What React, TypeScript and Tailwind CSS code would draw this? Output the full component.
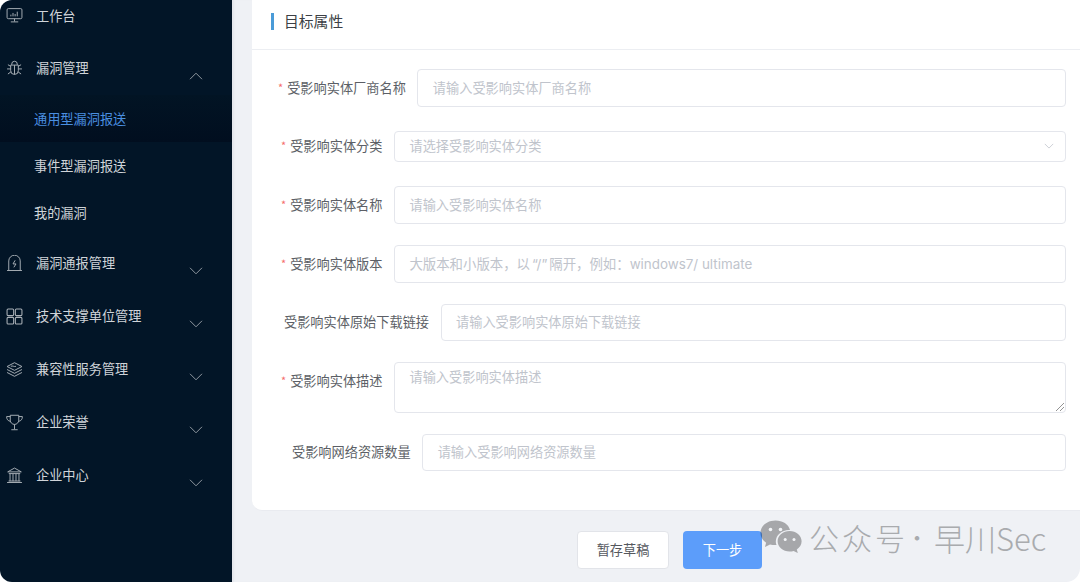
import React from "react";

const font = { fontFamily: '"Noto Sans CJK SC", "Noto Sans", sans-serif' };
const latin = { fontFamily: 'Inter, "Noto Sans CJK SC", sans-serif' };

const iconCls = "w-[17px] h-[17px] shrink-0 text-[#aab1b8]";

function Monitor() {
  return (
    <svg viewBox="0 0 16 16" fill="none" stroke="currentColor" strokeWidth="0.9" className={iconCls}>
      <rect x="1" y="1.5" width="14" height="9.5" rx="1.2" />
      <path d="M8 11v2.6M4.5 14h7M4.6 8.8V7.2M6.6 8.8V5.6M8.6 8.8V6.6M10.6 8.8V4.4" />
    </svg>
  );
}
function Bug() {
  return (
    <svg viewBox="0 0 16 16" fill="none" stroke="currentColor" strokeWidth="0.9" className={iconCls}>
      <path d="M5.4 4.6V3.8a2.6 2.6 0 0 1 5.2 0v.8" />
      <path d="M4.4 4.8h7.2v5.2a3.6 3.6 0 0 1-7.2 0z" />
      <path d="M8 4.8V13.6M1 8.4h3.4M11.6 8.4H15M1.8 4.4l2.6 1.6M14.2 4.4l-2.6 1.6M1.8 13.2l2.8-2M14.2 13.2l-2.8-2" />
    </svg>
  );
}
function Alarm() {
  return (
    <svg viewBox="0 0 16 16" fill="none" stroke="currentColor" strokeWidth="0.9" className={iconCls}>
      <path d="M2.6 14.4V5.6a5.4 5.4 0 0 1 10.8 0v8.8" />
      <path d="M1 14.6h14" />
      <path d="M8.6 5 6.6 8.4h2.8L7.4 11.6" />
    </svg>
  );
}
function Grid() {
  return (
    <svg viewBox="0 0 16 16" fill="none" stroke="currentColor" strokeWidth="1" className={iconCls}>
      <rect x="1" y="1" width="6.2" height="6.2" rx="1" />
      <rect x="8.8" y="1" width="6.2" height="6.2" rx="1" />
      <rect x="1" y="8.8" width="6.2" height="6.2" rx="1" />
      <rect x="8.8" y="8.8" width="6.2" height="6.2" rx="1" />
    </svg>
  );
}
function Layers() {
  return (
    <svg viewBox="0 0 16 16" fill="none" stroke="currentColor" strokeWidth="0.9" className={iconCls}>
      <path d="M8 1.6 15 5.2 8 8.8 1 5.2z" />
      <path d="M1 8 8 11.6 15 8" />
      <path d="M1 10.8 8 14.4 15 10.8" />
      <path d="M4.6 5c1.6-.9 3 .7 4.8 0" />
    </svg>
  );
}
function Trophy() {
  return (
    <svg viewBox="0 0 16 16" fill="none" stroke="currentColor" strokeWidth="0.9" className={iconCls}>
      <path d="M4 1.2h8v4.6a4 4 0 0 1-8 0z" />
      <path d="M4 2.4H.6c0 2.6 1 4 3.8 4.6M12 2.4h3.4c0 2.6-1 4-3.8 4.6" />
      <path d="M8 9.8v4.6M5 14.8h6" />
    </svg>
  );
}
function Bank() {
  return (
    <svg viewBox="0 0 16 16" fill="none" stroke="currentColor" strokeWidth="0.9" className={iconCls}>
      <path d="M8 1 1.6 4.6h12.8z" />
      <path d="M2.6 6.2h10.8M1 14.6h14M3.8 6.6v6.8M6.6 6.6v6.8M9.4 6.6v6.8M12.2 6.6v6.8M2.4 13.2h11.2" />
    </svg>
  );
}
function Chevron({ up }: { up?: boolean }) {
  return (
    <svg viewBox="0 0 14 8" fill="none" stroke="#8f979f" strokeWidth="1" className="w-[14px] h-[8px]">
      <path d={up ? "M1 7.2 7 1.2l6 6" : "M1 .8l6 6 6-6"} />
    </svg>
  );
}

function NavItem({
  icon,
  label,
  up,
  noChevron,
  h = "h-[53px]",
}: {
  icon: React.ReactNode;
  label: string;
  up?: boolean;
  noChevron?: boolean;
  h?: string;
}) {
  return (
    <div className={"flex items-center pl-[6px] relative shrink-0 " + h}>
      <div className="w-[16px] h-[16px] flex items-center justify-center">{icon}</div>
      <span className="ml-[14px] text-[13.2px] text-[#d0d4d9] leading-none">{label}</span>
      {!noChevron && (
        <div className="absolute left-[189px] top-[30px]">
          <Chevron up={up} />
        </div>
      )}
    </div>
  );
}

function SubItem({ label, active }: { label: string; active?: boolean }) {
  return (
    <div
      className={
        "h-[47.35px] flex items-center pl-[34px] text-[13.2px] leading-none shrink-0 " +
        (active ? "text-[#4a8fe0] bg-gradient-to-b from-[#021424] to-[#010e1f]" : "text-[#d0d4d9]")
      }
    >
      {label}
    </div>
  );
}

function Label({ text, required, pl }: { text: string; required?: boolean; pl: string }) {
  return (
    <div className={"flex items-center shrink-0 text-[13.2px] text-[#5c5f66] leading-none " + pl}>
      {required && <span className="text-[#f56c6c] text-[11px] mr-[4px] leading-none">*</span>}
      <span>{text}</span>
    </div>
  );
}

const boxCls =
  "flex-1 min-w-0 border border-[#e4e6ec] rounded-[4px] bg-white text-[13.2px] text-[#c0c4cc] flex items-center pr-[11px] leading-none";
const gapA = " ml-[11px] pl-[15px]";
const gapB = " ml-[11.5px] pl-[14.5px]";

function Row({
  label,
  required,
  pl,
  placeholder,
  h,
  mt,
  select,
  gap = gapB,
}: {
  label: string;
  required?: boolean;
  pl: string;
  placeholder: React.ReactNode;
  h: string;
  mt: string;
  select?: boolean;
  gap?: string;
}) {
  return (
    <div className={"flex items-center pr-[14px] " + mt}>
      <Label text={label} required={required} pl={pl} />
      <div className={boxCls + gap + " justify-between " + h}>
        <span>{placeholder}</span>
        {select && (
          <svg viewBox="0 0 12 7" fill="none" stroke="#c4c8cf" strokeWidth="1" className="w-[10px] h-[6px]">
            <path d="M1 1l5 5 5-5" />
          </svg>
        )}
      </div>
    </div>
  );
}

export default function App() {
  return (
    <div className="relative w-[1080px] h-[582px] bg-white overflow-hidden" style={font}>
      <div className="w-full h-full flex bg-[#eff1f5] rounded-tl-[12px] rounded-bl-[12px] rounded-br-[14px] overflow-hidden">
        <aside className="w-[232px] h-full bg-[#021527] shrink-0 overflow-hidden">
          <div className="flex flex-col -mt-[10.5px]">
            <NavItem icon={<Monitor />} label="工作台" noChevron h="h-[52px]" />
            <NavItem icon={<Bug />} label="漏洞管理" up />
            <SubItem label="通用型漏洞报送" active />
            <SubItem label="事件型漏洞报送" />
            <SubItem label="我的漏洞" />
            <NavItem icon={<Alarm />} label="漏洞通报管理" />
            <NavItem icon={<Grid />} label="技术支撑单位管理" />
            <NavItem icon={<Layers />} label="兼容性服务管理" />
            <NavItem icon={<Trophy />} label="企业荣誉" />
            <NavItem icon={<Bank />} label="企业中心" />
          </div>
        </aside>
        <main className="flex-1 min-w-0 flex flex-col pl-[20px] shadow-[inset_3px_0_2px_-1px_#e4e6eb]">
          <section className="h-[511px] bg-white rounded-bl-[10px] shrink-0 border-b border-[#e9ebf0]">
            <div className="h-[50px] border-b border-[#eceef2] flex items-center pl-[19px] pb-[6px]">
              <div className="w-[3px] h-[17px] bg-[#4a9bd8]" />
              <h2 className="ml-[10px] text-[14.8px] font-normal text-[#3c3f45] leading-none">目标属性</h2>
            </div>
            <Row gap={gapA} mt="mt-[19px]" h="h-[38px]" pl="pl-[26px]" required label="受影响实体厂商名称" placeholder="请输入受影响实体厂商名称" />
            <Row mt="mt-[24px]" h="h-[31px] pb-px" pl="pl-[29px] pb-px" required label="受影响实体分类" placeholder="请选择受影响实体分类" select />
            <Row mt="mt-[24px]" h="h-[38px]" pl="pl-[29px]" required label="受影响实体名称" placeholder="请输入受影响实体名称" />
            <Row
              mt="mt-[21px]"
              h="h-[38px]"
              pl="pl-[29px]"
              required
              label="受影响实体版本"
              placeholder={
                <span className="inline-flex items-center text-[13.4px] whitespace-pre" style={latin}>
                  大版本和小版本，以<span className="px-[2px]">“/”</span>隔开，例如：windows7/ ultimate
                </span>
              }
            />
            <Row mt="mt-[21px]" h="h-[37px] pb-px" pl="pl-[32px] pb-px" label="受影响实体原始下载链接" placeholder="请输入受影响实体原始下载链接" />
            <div className="flex items-start pr-[14px] mt-[21px]">
              <div className="h-[38px] flex items-center">
                <Label text="受影响实体描述" required pl="pl-[29px]" />
              </div>
              <div className={boxCls + gapB + " h-[51px] !items-start pt-[7px] relative"}>
                <span>请输入受影响实体描述</span>
                <svg viewBox="0 0 8 8" stroke="#777" strokeWidth="0.8" className="absolute right-[1px] bottom-[1px] w-[8px] h-[8px]">
                  <path d="M0 8 8 0M4 8l4-4" />
                </svg>
              </div>
            </div>
            <Row gap={gapA} mt="mt-[21px]" h="h-[37px] pb-px" pl="pl-[40px] pb-px" label="受影响网络资源数量" placeholder="请输入受影响网络资源数量" />
          </section>
          <div className="flex-1 flex items-center pl-[325px] pt-[6px] gap-[14px]">
            <button className="w-[92px] h-[38px] bg-white border border-[#e2e4e9] rounded-[4px] text-[13.2px] text-[#55585e] leading-none">
              暂存草稿
            </button>
            <button className="w-[79px] h-[38px] bg-[#5c9dfa] rounded-[4px] text-[13.2px] text-white leading-none">
              下一步
            </button>
          </div>
        </main>
      </div>
      <div className="absolute left-[760px] top-[520px] flex items-center pointer-events-none">
        <svg viewBox="0 0 42 34" className="w-[42px] h-[34px] opacity-30">
          <path d="M15.5 0.5C7 .5.5 6 .5 13c0 4 2.2 7.4 5.6 9.8L5 27l5-2.6c1.6.5 3.5.7 5.5.7h1c-.5-1.2-.7-2.4-.7-3.6 0-6.4 6-11.6 13.2-11.6h1C28.6 4.3 22.6.5 15.5.5z" fill="#000" />
          <path d="M41.6 21.3c0-5.6-5.5-10.2-12-10.2s-12 4.6-12 10.2 5.5 10.2 12 10.2c1.4 0 2.8-.2 4-.6l4.2 2.2-1-3.6c2.9-1.9 4.8-4.8 4.8-8.2z" fill="#000" />
          <circle cx="10.5" cy="9.5" r="1.8" fill="#fff" />
          <circle cx="20.5" cy="9.5" r="1.8" fill="#fff" />
          <circle cx="25.2" cy="19.5" r="1.5" fill="#fff" />
          <circle cx="34" cy="19.5" r="1.5" fill="#fff" />
        </svg>
        <div className="ml-[7px] flex items-center leading-none text-[#a9abae] whitespace-nowrap font-light">
          <span className="text-[30px] tracking-[3px]">公众</span>
          <span className="text-[30px]">号</span>
          <span className="text-[24px]">·</span>
          <span className="ml-[5px] text-[31px]">早川Sec</span>
        </div>
      </div>
    </div>
  );
}
